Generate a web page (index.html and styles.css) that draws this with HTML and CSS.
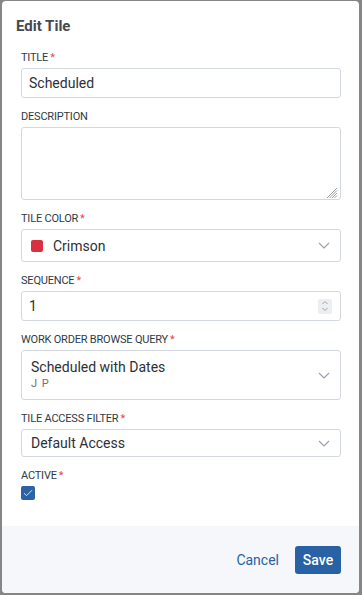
FILE: index.html
```html
<!DOCTYPE html>
<html lang="en">
<head>
    <meta charset="utf-8">
    <title>Edit Tile</title>
    <link rel="stylesheet" href="styles.css">
</head>
<body>
<div class="dialog">
    <div class="dialog-title">Edit Tile</div>
    <div class="dialog-body">
        <div class="form-group">
            <label class="form-label">Title<span class="req">*</span></label>
            <div class="field field-title">Scheduled</div>
        </div>

        <div class="form-group">
            <label class="form-label">Description</label>
            <div class="area-wrap">
                <textarea class="field field-area"></textarea>
                <svg class="grip" width="12" height="11" viewBox="0 0 12 11"><path d="M11 1L1 11M11 3.5L3.5 11M11 6L6 11M11 8.5L8.5 11" fill="none" stroke="#8e959c" stroke-width="0.9"/></svg>
            </div>
        </div>

        <div class="form-group">
            <label class="form-label">Tile Color<span class="req">*</span></label>
            <div class="field field-select field-color">
                <span class="swatch"></span>
                <span class="field-text">Crimson</span>
                <svg class="chevron" width="12" height="7" viewBox="0 0 12 7"><path d="M1 1l5 5 5-5" fill="none" stroke="#98a2ad" stroke-width="1.2"/></svg>
            </div>
        </div>

        <div class="form-group">
            <label class="form-label">Sequence<span class="req">*</span></label>
            <div class="field field-number">
                <span class="field-text">1</span>
                <span class="spinner">
                    <svg width="8" height="12" viewBox="0 0 8 12"><path d="M1.5 4l2.5-2.5 2.5 2.5M1.5 8l2.5 2.5 2.5-2.5" fill="none" stroke="#9aa3ad" stroke-width="1"/></svg>
                </span>
            </div>
        </div>

        <div class="form-group">
            <label class="form-label">Work Order Browse Query<span class="req">*</span></label>
            <div class="field field-select field-query">
                <div class="query-text">
                    <div class="field-text">Scheduled with Dates</div>
                    <div class="sub-text">J P</div>
                </div>
                <svg class="chevron" width="12" height="7" viewBox="0 0 12 7"><path d="M1 1l5 5 5-5" fill="none" stroke="#98a2ad" stroke-width="1.2"/></svg>
            </div>
        </div>

        <div class="form-group">
            <label class="form-label">Tile Access Filter<span class="req">*</span></label>
            <div class="field field-select field-access">
                <span class="field-text">Default Access</span>
                <svg class="chevron" width="12" height="7" viewBox="0 0 12 7"><path d="M1 1l5 5 5-5" fill="none" stroke="#98a2ad" stroke-width="1.2"/></svg>
            </div>
        </div>

        <div class="form-group">
            <label class="form-label">Active<span class="req">*</span></label>
            <span class="checkbox">
                <svg width="10" height="8" viewBox="0 0 10 8"><path d="M1 4.2l2.6 2.4L9 1.2" fill="none" stroke="#e8eef6" stroke-width="0.9"/></svg>
            </span>
        </div>
    </div>
    <div class="dialog-footer">
        <button class="btn-link">Cancel</button>
        <button class="btn-primary">Save</button>
    </div>
</div>
</body>
</html>
```

FILE: styles.css
```css
html, body {
    margin: 0;
    height: 100%;
}

body {
    background-color: #868686;
    font-family: Roboto, "Liberation Sans", sans-serif;
    color: #2b3138;
    padding: 1px 3px 2px 2px;
    box-sizing: border-box;
}

.dialog {
    background-color: #fff;
    border-radius: 4px;
    height: 592px;
    display: flex;
    flex-direction: column;
    overflow: hidden;
}

.dialog-title {
    padding: 16px 14px 0;
    font-size: 15px;
    font-weight: bold;
    color: #454a50;
    line-height: 18px;
}

.dialog-body {
    padding: 16px 18px 0 19px;
    flex: 1;
}

.form-group {
    margin-bottom: 12px;
}

.form-label {
    display: block;
    font-size: 11px;
    line-height: 13px;
    text-transform: uppercase;
    color: #2f3a45;
    margin-bottom: 4px;
    letter-spacing: -0.2px;
}

.req {
    color: #e5484d;
    margin-left: 2px;
}

.field {
    box-sizing: border-box;
    border: 1px solid #d3d8df;
    border-radius: 3px;
    font-size: 14px;
    color: #2b3138;
    display: flex;
    align-items: center;
    padding: 0 8px 0 7px;
    width: 100%;
}

.field-title {
    height: 30px;
}

.area-wrap {
    position: relative;
}

.field-area {
    display: block;
    height: 73px;
    resize: none;
    font-family: inherit;
    margin: 0;
}

.grip {
    position: absolute;
    right: 3px;
    bottom: 2px;
}

.field-color {
    height: 33px;
    padding-left: 9px;
}

.field-number {
    height: 30px;
}

.field-query {
    height: 50px;
    padding-left: 9px;
}

.field-access {
    height: 28px;
    padding-left: 9px;
}

.field-text {
    flex: 1;
}

.swatch {
    width: 12px;
    height: 12px;
    border-radius: 2px;
    background-color: #d8303e;
    margin-right: 10px;
}

.chevron {
    margin-right: 2px;
}

.spinner {
    width: 14px;
    height: 15px;
    background-color: #eceef0;
    border-radius: 2px;
    display: flex;
    align-items: center;
    justify-content: center;
}

.query-text {
    flex: 1;
    line-height: 15px;
}

.sub-text {
    font-size: 11px;
    color: #6b737c;
    letter-spacing: 1px;
    margin-top: 1px;
}

.checkbox {
    display: flex;
    align-items: center;
    justify-content: center;
    width: 14px;
    height: 14px;
    border-radius: 2px;
    background-color: #2d62a4;
    margin-top: 1px;
}

.dialog-footer {
    background-color: #f5f7fa;
    height: 67px;
    display: flex;
    align-items: center;
    justify-content: flex-end;
    padding: 0 18px 0 0;
}

.btn-link {
    background: none;
    border: none;
    font-family: inherit;
    font-size: 14px;
    color: #2862a5;
    padding: 0;
    margin-right: 16px;
}

.btn-primary {
    background-color: #2862a5;
    border: none;
    border-radius: 3px;
    color: #fff;
    font-family: inherit;
    font-size: 14px;
    font-weight: 500;
    width: 46px;
    height: 28px;
    padding: 0;
}
```
